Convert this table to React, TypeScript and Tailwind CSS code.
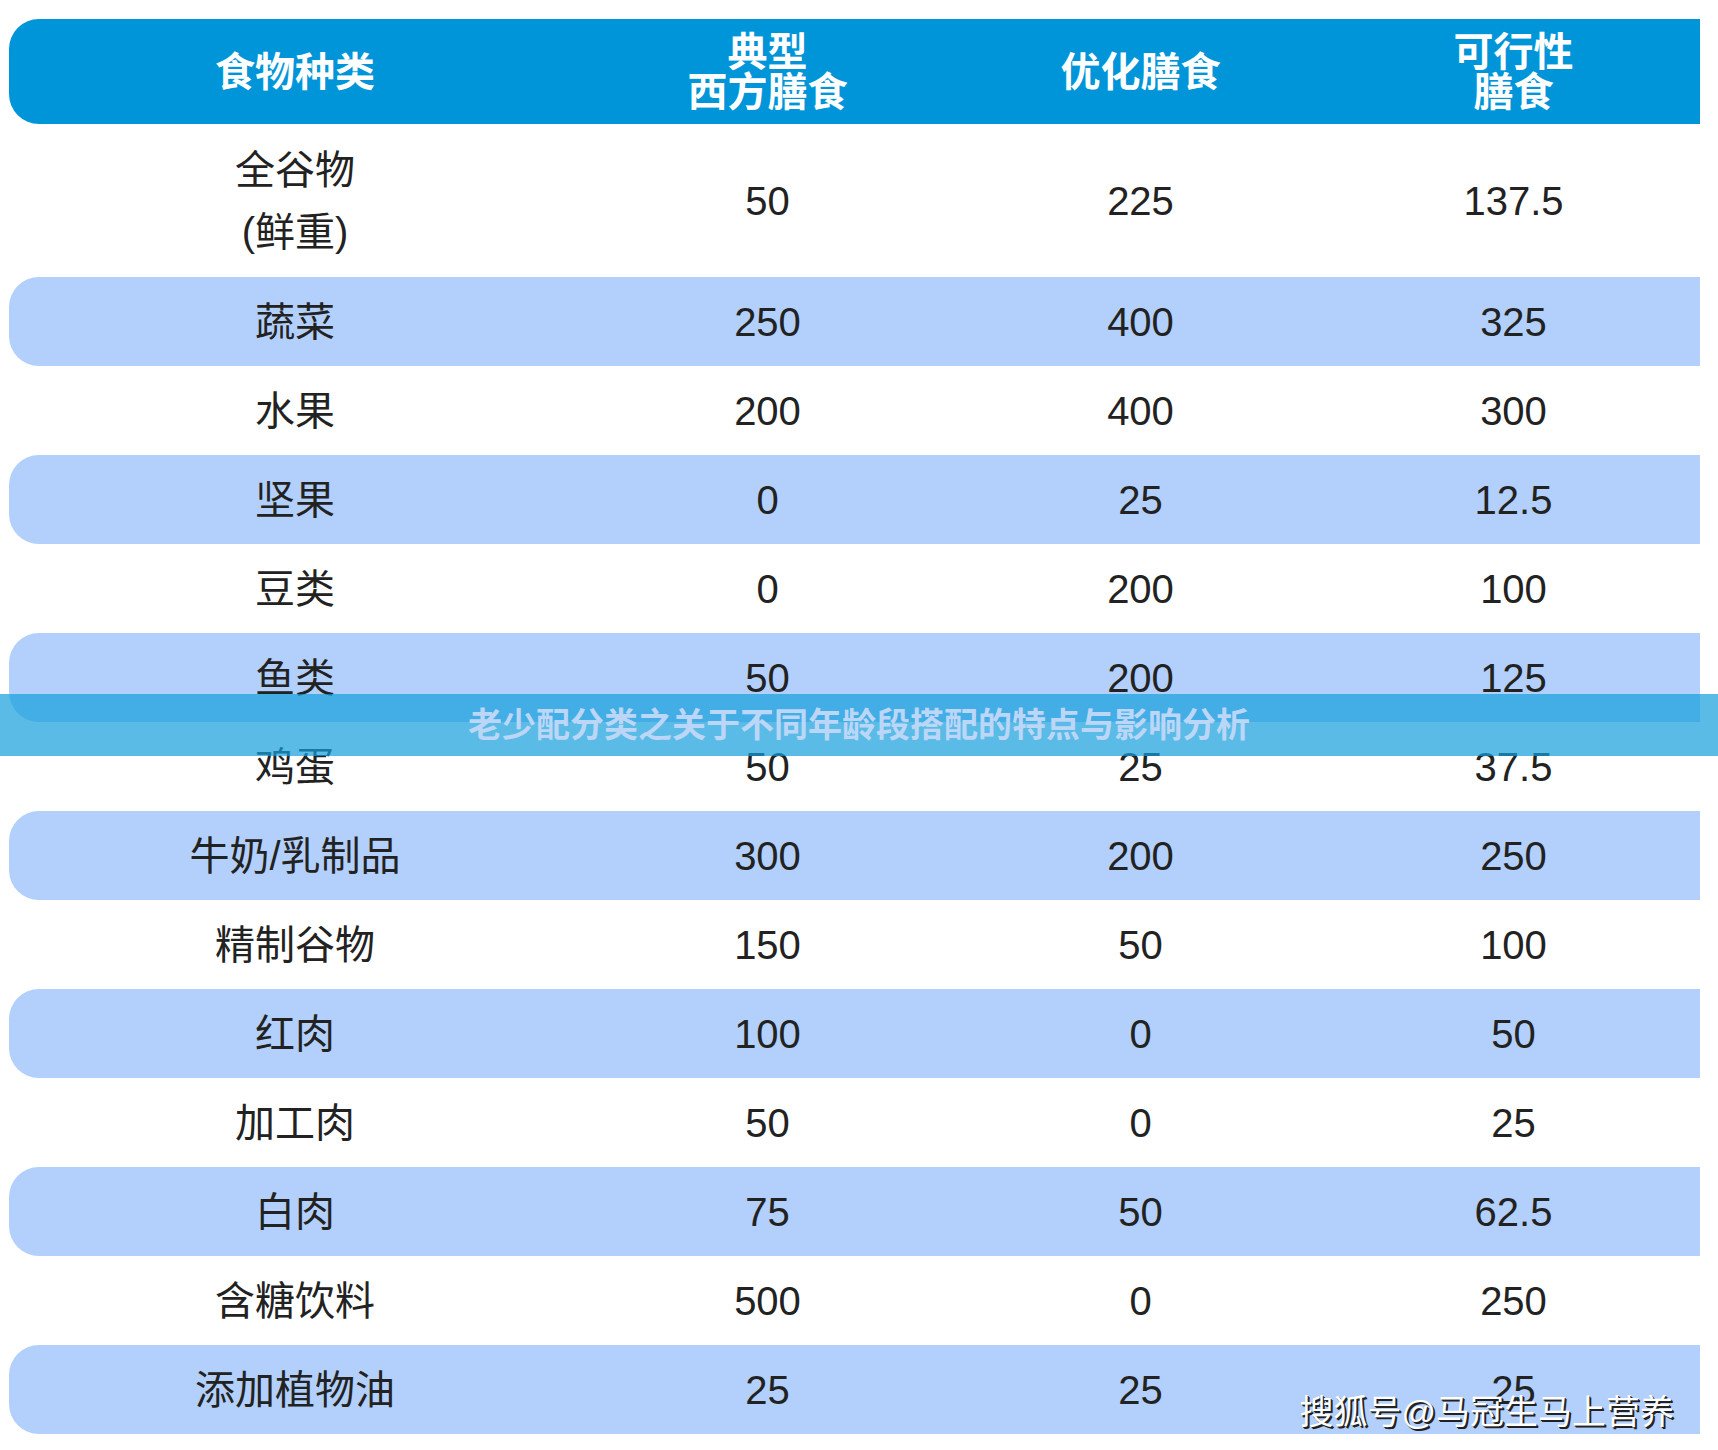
import React from "react";

const rows: [React.ReactNode, string, string, string][] = [
  ["蔬菜", "250", "400", "325"],
  ["水果", "200", "400", "300"],
  ["坚果", "0", "25", "12.5"],
  ["豆类", "0", "200", "100"],
  ["鱼类", "50", "200", "125"],
  ["鸡蛋", "50", "25", "37.5"],
  ["牛奶/乳制品", "300", "200", "250"],
  ["精制谷物", "150", "50", "100"],
  ["红肉", "100", "0", "50"],
  ["加工肉", "50", "0", "25"],
  ["白肉", "75", "50", "62.5"],
  ["含糖饮料", "500", "0", "250"],
  ["添加植物油", "25", "25", "25"],
];

const font = { fontFamily: '"Liberation Sans", "Noto Sans CJK SC", sans-serif' };

export default function App() {
  return (
    <div className="relative w-[1718px] h-[1450px] bg-white overflow-hidden" style={font}>
      <div className="pt-[19px] pl-[9px] pr-[18px]">
        {/* Header */}
        <div className="grid grid-cols-[572px_1fr_1fr_1fr] h-[105px] bg-[#0095d9] rounded-l-[30px] text-white font-bold text-[40px] leading-[40px] items-center text-center">
          <div>食物种类</div>
          <div>
            典型
            <br />
            西方膳食
          </div>
          <div>优化膳食</div>
          <div>
            可行性
            <br />
            膳食
          </div>
        </div>
        {/* First row */}
        <div className="grid grid-cols-[572px_1fr_1fr_1fr] h-[153px] items-center text-center text-[40px] text-[#222222]">
          <div className="leading-[62px]">
            全谷物
            <br />
            (鲜重)
          </div>
          <div>50</div>
          <div>225</div>
          <div>137.5</div>
        </div>
        {rows.map((r, i) => (
          <div
            key={i}
            className={
              "grid grid-cols-[572px_1fr_1fr_1fr] h-[89px] items-center text-center text-[40px] text-[#222222] " +
              (i % 2 === 0 ? "bg-[#b2d0fb] rounded-l-[30px]" : "")
            }
          >
            <div>{r[0]}</div>
            <div>{r[1]}</div>
            <div>{r[2]}</div>
            <div>{r[3]}</div>
          </div>
        ))}
      </div>

      {/* Overlay banner */}
      <div className="absolute left-0 right-0 top-[694px] h-[62px] bg-[rgba(20,160,220,0.7)] flex items-center justify-center">
        <span className="text-[34px] font-bold text-[#bcd6f7] tracking-[0px]">
          老少配分类之关于不同年龄段搭配的特点与影响分析
        </span>
      </div>

      {/* Watermark */}
      <div
        className="absolute right-[44px] top-[1390px] text-[34px] text-white leading-[44px]"
        style={{ textShadow: "2px 2px 0 #222, 1px 1px 0 #222" }}
      >
        搜狐号@马冠生马上营养
      </div>
    </div>
  );
}
